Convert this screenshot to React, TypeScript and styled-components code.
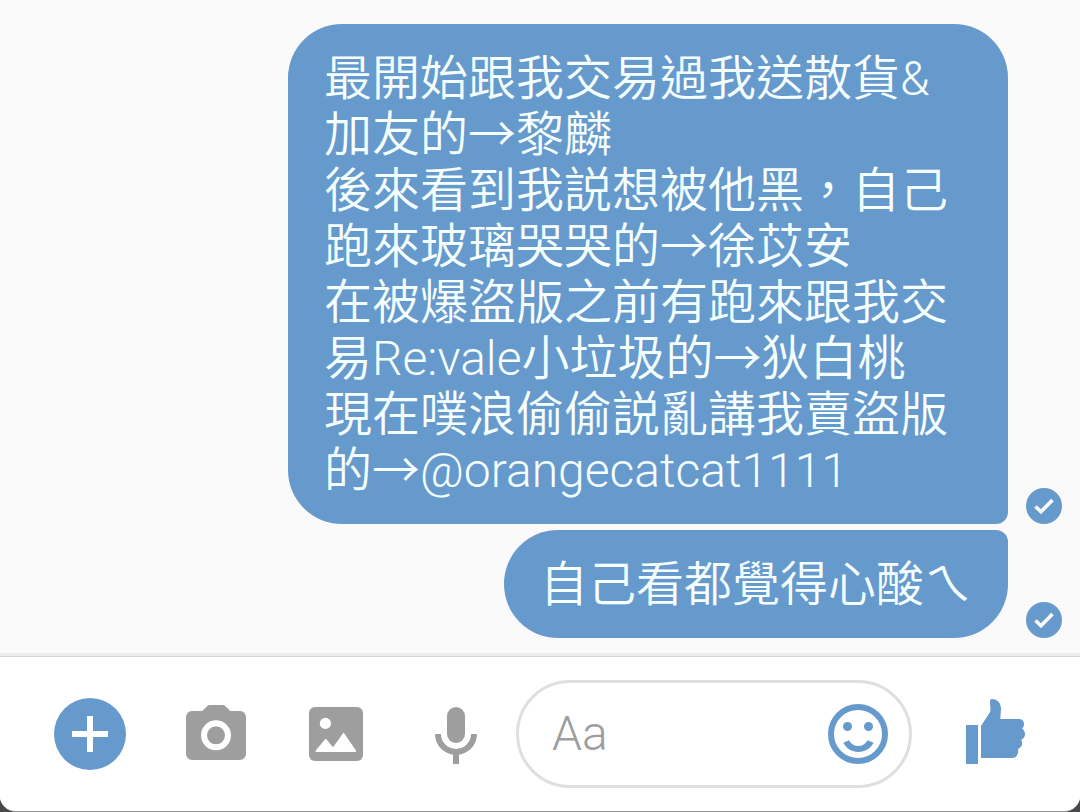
import React from "react";
import styled, { createGlobalStyle } from "styled-components";

const BLUE = "#6699cc";
const GREY = "#9e9e9e";
const FONT = `Roboto, "Noto Sans CJK TC", sans-serif`;

const GlobalStyle = createGlobalStyle`
  *, *::before, *::after { box-sizing: border-box; }
  body { margin: 0; background: #48484a; }
  button { border: 0; padding: 0; background: none; cursor: pointer; }
`;

const Screen = styled.div`
  display: flex;
  flex-direction: column;
  min-height: 100vh;
  border-bottom: 1px solid #949494;
  border-radius: 0 0 16px 16px;
  background: #fff;
  overflow: hidden;
  font-family: ${FONT};
`;

const Messages = styled.main`
  display: flex;
  flex: 1;
  flex-direction: column;
  gap: 6px;
  padding: 24px 18px 15px;
  background: #fafafa;
`;

const MessageRow = styled.div`
  display: flex;
  justify-content: flex-end;
  align-items: flex-end;
  gap: 18px;
`;

const Bubble = styled.p<{ $position: "first" | "last" }>`
  margin: 0;
  max-width: 720px;
  padding: 27px 36px 25px;
  border-radius: ${(p) =>
    p.$position === "first" ? "54px 54px 12px 54px" : "54px 12px 54px 54px"};
  background: ${BLUE};
  color: #f5ffff;
  font-size: 48px;
  font-weight: 350;
  line-height: 56px;
  white-space: pre-line;
  overflow-wrap: anywhere;
`;

const Status = styled.svg`
  display: block;
  flex: none;
  width: 36px;
  height: 36px;
`;

const Composer = styled.form`
  display: flex;
  align-items: center;
  padding: 23px 48px 23px 54px;
  border-top: 1px solid #d8d8d8;
  box-shadow: 0 -3px 0 #ececec;
  background: #fff;
`;

const Tools = styled.div`
  display: flex;
  gap: 48px;
  margin: 0 24px 0 54px;
`;

const IconButton = styled.button<{ $color: string }>`
  flex: none;
  width: 72px;
  height: 72px;
  color: ${(p) => p.$color};

  svg {
    display: block;
    width: 100%;
    height: 100%;
  }
`;

const Field = styled.div`
  display: flex;
  flex: 1;
  align-items: center;
  min-width: 0;
  height: 108px;
  margin-right: 48px;
  padding: 0 15px 0 33px;
  border: 3px solid #dfdfdf;
  border-radius: 54px;
`;

const TextInput = styled.input`
  flex: 1;
  min-width: 0;
  padding: 0;
  border: 0;
  outline: 0;
  background: none;
  color: #333;
  font-family: ${FONT};
  font-size: 48px;
  font-weight: 350;
  line-height: 56px;

  &::placeholder {
    color: ${GREY};
    opacity: 1;
  }
`;

const messages = [
  `最開始跟我交易過我送散貨&加友的→黎麟
後來看到我説想被他黑，自己跑來玻璃哭哭的→徐苡安
在被爆盜版之前有跑來跟我交易Re:vale小垃圾的→狄白桃
現在噗浪偷偷説亂講我賣盜版的→@orangecatcat1111`,
  "自己看都覺得心酸ㄟ",
];

const Delivered = () => (
  <Status viewBox="0 0 36 36" role="img" aria-label="已送達">
    <circle cx="18" cy="18" r="18" fill={BLUE} />
    <path d="M9.5 18.500 15 23.700 26.500 12" fill="none" stroke="#fafafa" strokeWidth="3.600" />
  </Status>
);

const PlusIcon = () => (
  <svg viewBox="0 0 72 72" aria-hidden="true">
    <circle cx="36" cy="36" r="36" fill="currentColor" />
    <path d="M33 18h6v15h15v6H39v15h-6V39H18v-6h15z" fill="#fff" />
  </svg>
);

const CameraIcon = () => (
  <svg viewBox="0 0 72 72" aria-hidden="true">
    <path
      d="M12 13h10.300l5-5Q28.300 7 29.500 7h13.300Q44.200 7 45.200 8l5 5H60a6 6 0 0 1 6 6v37a6 6 0 0 1-6 6H12a6 6 0 0 1-6-6V19a6 6 0 0 1 6-6z"
      fill="currentColor"
    />
    <circle cx="36" cy="37.300" r="12" fill="none" stroke="#fff" strokeWidth="6" />
  </svg>
);

const PhotoIcon = () => (
  <svg viewBox="0 0 72 72" aria-hidden="true">
    <rect x="9" y="9" width="54" height="54" rx="6" fill="currentColor" />
    <circle cx="25.400" cy="25.400" r="5.600" fill="#fff" />
    <path d="M15.700 52.500 25.700 40.500 33 49.200 43.600 34.500 56 52.500V54H15.700z" fill="#fff" />
  </svg>
);

const MicIcon = () => (
  <svg viewBox="0 0 72 72" aria-hidden="true">
    <rect x="27" y="9" width="18" height="36" rx="9" fill="currentColor" />
    <path d="M18 36a18 18 0 0 0 36 0M36 54v12" fill="none" stroke="currentColor" strokeWidth="6" />
  </svg>
);

const SmileIcon = () => (
  <svg viewBox="0 0 72 72" aria-hidden="true">
    <circle cx="36" cy="36" r="27" fill="none" stroke="currentColor" strokeWidth="6" />
    <circle cx="25.500" cy="28.500" r="4.500" fill="currentColor" />
    <circle cx="46.500" cy="28.500" r="4.500" fill="currentColor" />
    <path
      d="M21.300 44.800 27 42.200C29 46 32.300 48 36.300 48s7.300-2 9.300-5.800l6 2.600C48.600 50.500 43 54 36.300 54s-12-3.500-15-9.200z"
      fill="currentColor"
    />
  </svg>
);

const LikeIcon = () => (
  <svg viewBox="0 0 72 72" aria-hidden="true">
    <path d="M6 27h12v39H6z" fill="currentColor" />
    <path
      d="M21 60V28L29.800 14.500Q30.500 13.300 30.400 11.500L30 2.500Q30 1 32 1C37.500 1.300 41 5 41 11L40.300 21H58.500C62 21 64 23 64 25.700 64 28 63.400 29.500 62.200 30.800 64 32 65 34 65 36.300 65 38.800 63.600 40.800 61.200 41.800 63.300 45.500 62 49.500 58 51 59 55.500 56.500 60 52 60z"
      fill="currentColor"
    />
  </svg>
);

export default function App() {
  return (
    <>
      <GlobalStyle />
      <Screen lang="zh-Hant">
        <Messages>
          {messages.map((text, i) => (
            <MessageRow key={text}>
              <Bubble $position={i === 0 ? "first" : "last"}>{text}</Bubble>
              <Delivered />
            </MessageRow>
          ))}
        </Messages>
        <Composer onSubmit={(e: React.FormEvent) => e.preventDefault()}>
          <IconButton type="button" $color={BLUE} aria-label="更多">
            <PlusIcon />
          </IconButton>
          <Tools>
            <IconButton type="button" $color={GREY} aria-label="相機">
              <CameraIcon />
            </IconButton>
            <IconButton type="button" $color={GREY} aria-label="相片">
              <PhotoIcon />
            </IconButton>
            <IconButton type="button" $color={GREY} aria-label="語音">
              <MicIcon />
            </IconButton>
          </Tools>
          <Field>
            <TextInput type="text" placeholder="Aa" aria-label="訊息" />
            <IconButton type="button" $color={BLUE} aria-label="表情符號">
              <SmileIcon />
            </IconButton>
          </Field>
          <IconButton type="button" $color={BLUE} aria-label="讚">
            <LikeIcon />
          </IconButton>
        </Composer>
      </Screen>
    </>
  );
}
